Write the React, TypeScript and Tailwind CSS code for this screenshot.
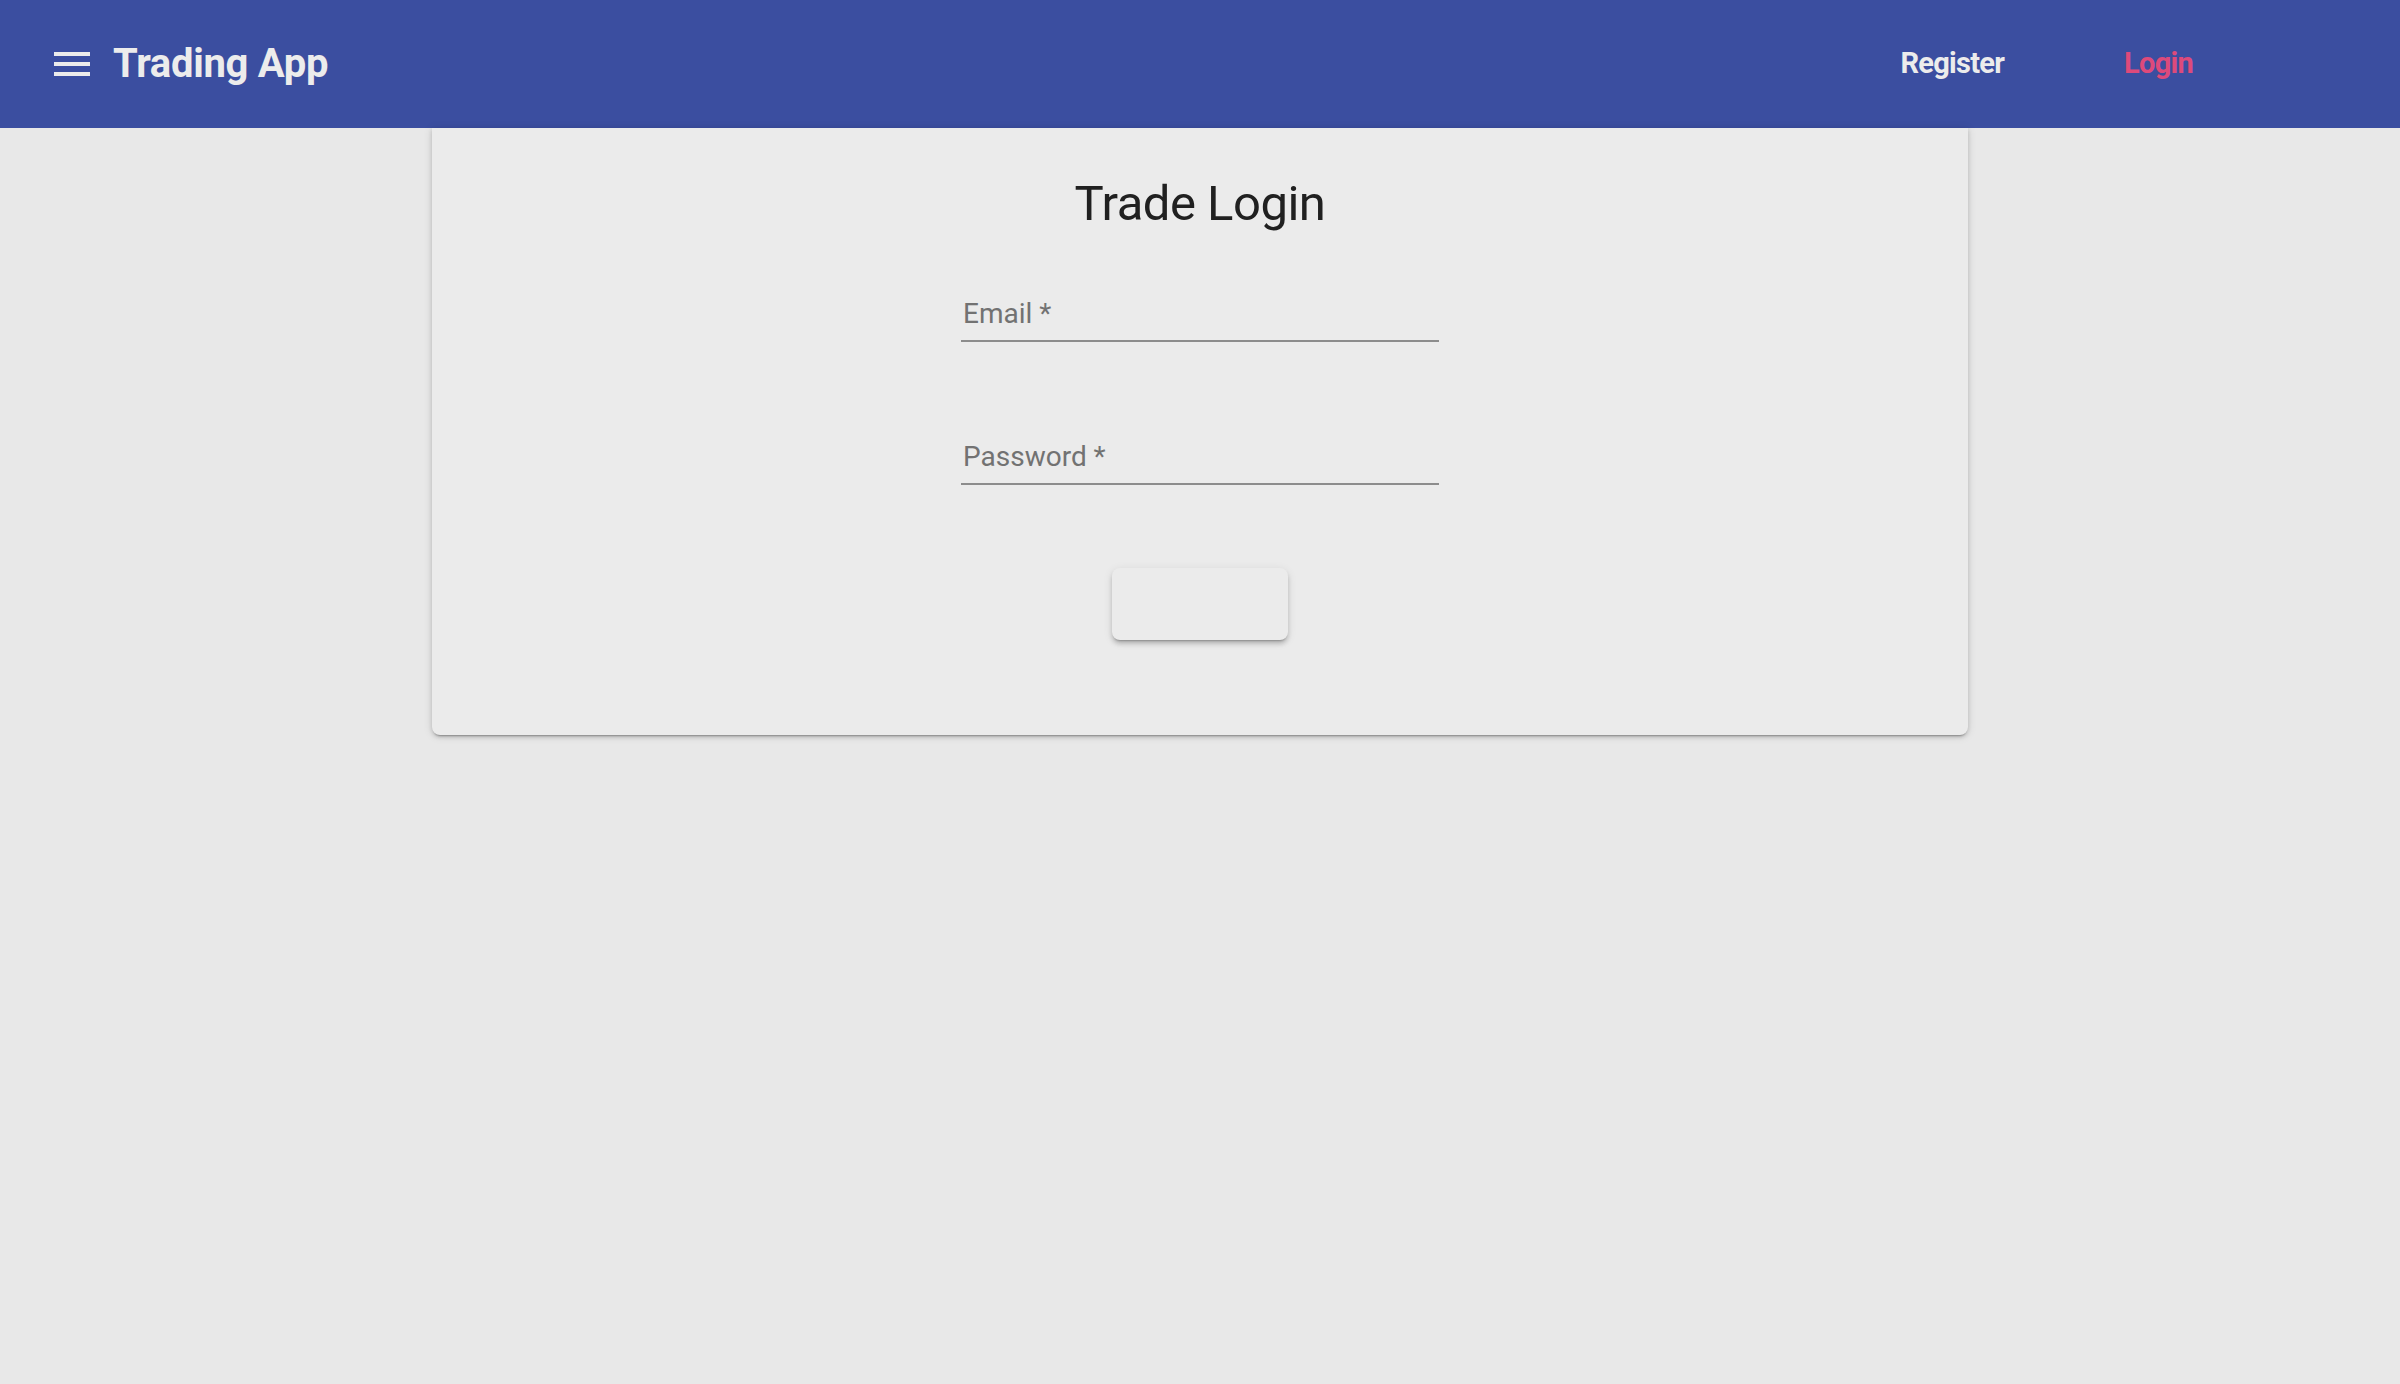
import React from "react";

const MenuIcon = () => (
  <svg viewBox="0 0 24 24" className="w-12 h-12" fill="#ececec">
    <path d="M3 18h18v-2H3v2zm0-5h18v-2H3v2zm0-7v2h18V6H3z" />
  </svg>
);

const Field = ({ label }: { label: string }) => (
  <div className="w-[478px] pb-[12px] border-b-2 border-[#8c8c8c]">
    <div className="text-[28px] leading-[28px] text-[#727272] pl-[2px]">{label}</div>
  </div>
);

const App = () => {
  return (
    <div
      className="min-h-screen w-full bg-[#e8e8e8]"
      style={{ fontFamily: "Roboto, 'Noto Sans', sans-serif" }}
    >
      <header className="h-[128px] bg-[#3b4ea0] flex items-center pl-12 pr-[207px]">
        <MenuIcon />
        <h1 className="ml-[17px] text-[40px] font-bold text-[#ececec] tracking-[-0.3px]">
          Trading App
        </h1>
        <nav className="ml-auto flex items-center gap-[120px]">
          <a className="text-[29px] font-bold text-[#ececec] tracking-tight">Register</a>
          <a className="text-[29px] font-bold text-[#dd4a7b] tracking-tight">Login</a>
        </nav>
      </header>

      <main className="w-[1536px] mx-auto bg-[#ebebeb] rounded-b-lg shadow-[0_3px_2px_-2px_rgba(0,0,0,0.3),0_2px_4px_0_rgba(0,0,0,0.14),0_1px_10px_0_rgba(0,0,0,0.12)] flex flex-col items-center pt-[51px] pb-[95px]">
        <h2 className="text-[49px] leading-[49px] text-[#202020] tracking-[-0.5px]">Trade Login</h2>
        <div className="mt-[72px]">
          <Field label="Email *" />
        </div>
        <div className="mt-[101px]">
          <Field label="Password *" />
        </div>
        <button className="mt-[83px] w-[176px] h-[72px] rounded-[8px] bg-[#ebebeb] shadow-[0_3px_2px_-2px_rgba(0,0,0,0.25),0_4px_4px_0_rgba(0,0,0,0.16),0_2px_10px_0_rgba(0,0,0,0.1)]" />
      </main>
    </div>
  );
};

export default App;
